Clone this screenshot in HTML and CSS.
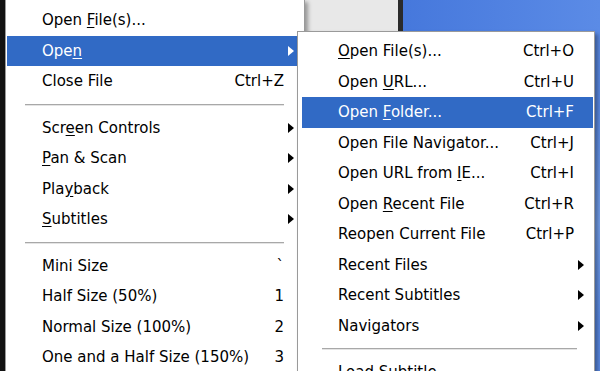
FILE: index.html
```html
<!DOCTYPE html>
<html lang="en">

<head>
    <meta charset="UTF-8">
    <meta name="viewport" content="width=device-width, initial-scale=1.0">
    <title>Open Menu</title>
    <link rel="stylesheet" href="styles.css">
</head>

<body>
    <div class="screen">
        <div class="window-edge"></div>

        <!-- main context menu -->
        <div class="menu menu-main">
            <div class="item"><span class="label">Open <u>F</u>ile(s)...</span><span class="key"></span><span class="sub"></span></div>
            <div class="item active"><span class="label">Ope<u>n</u></span><span class="key"></span><span class="sub"><i class="arrow"></i></span></div>
            <div class="item"><span class="label">Close File</span><span class="key">Ctrl+Z</span><span class="sub"></span></div>
            <div class="separator"></div>
            <div class="item"><span class="label">Scr<u>e</u>en Controls</span><span class="key"></span><span class="sub"><i class="arrow"></i></span></div>
            <div class="item"><span class="label"><u>P</u>an &amp; Scan</span><span class="key"></span><span class="sub"><i class="arrow"></i></span></div>
            <div class="item"><span class="label">Pla<u>y</u>back</span><span class="key"></span><span class="sub"><i class="arrow"></i></span></div>
            <div class="item"><span class="label"><u>S</u>ubtitles</span><span class="key"></span><span class="sub"><i class="arrow"></i></span></div>
            <div class="separator"></div>
            <div class="item"><span class="label">Mini Size</span><span class="key">`</span><span class="sub"></span></div>
            <div class="item"><span class="label">Half Size (50%)</span><span class="key">1</span><span class="sub"></span></div>
            <div class="item"><span class="label">Normal Size (100%)</span><span class="key">2</span><span class="sub"></span></div>
            <div class="item"><span class="label">One and a Half Size (150%)</span><span class="key">3</span><span class="sub"></span></div>
        </div>

        <!-- "Open" flyout -->
        <div class="menu menu-open">
            <div class="item"><span class="label"><u>O</u>pen File(s)...</span><span class="key">Ctrl+O</span><span class="sub"></span></div>
            <div class="item"><span class="label">Open <u>U</u>RL...</span><span class="key">Ctrl+U</span><span class="sub"></span></div>
            <div class="item active"><span class="label">Open <u>F</u>older...</span><span class="key">Ctrl+F</span><span class="sub"></span></div>
            <div class="item"><span class="label">Open File Navigator...</span><span class="key">Ctrl+J</span><span class="sub"></span></div>
            <div class="item"><span class="label">Open URL from <u>I</u>E...</span><span class="key">Ctrl+I</span><span class="sub"></span></div>
            <div class="item"><span class="label">Open <u>R</u>ecent File</span><span class="key">Ctrl+R</span><span class="sub"></span></div>
            <div class="item"><span class="label">Reopen Current File</span><span class="key">Ctrl+P</span><span class="sub"></span></div>
            <div class="item"><span class="label">Recent Files</span><span class="key"></span><span class="sub"><i class="arrow"></i></span></div>
            <div class="item"><span class="label">Recent Subtitles</span><span class="key"></span><span class="sub"><i class="arrow"></i></span></div>
            <div class="item"><span class="label">Navigators</span><span class="key"></span><span class="sub"><i class="arrow"></i></span></div>
            <div class="separator"></div>
            <div class="item"><span class="label">Load Subtitle...</span><span class="key"></span><span class="sub"></span></div>
        </div>
    </div>
</body>

</html>
```

FILE: styles.css
```css
body {
    margin: 0;
    font-family: "DejaVu Sans", Verdana, sans-serif;
    font-size: 15px;
    color: #000;
}

.screen {
    position: relative;
    display: flex;
    align-items: flex-start;
    width: 600px;
    height: 371px;
    overflow: hidden;
    background:
        linear-gradient(160deg, rgba(255, 255, 255, 0) 55%, rgba(150, 190, 250, 0.45) 75%, rgba(255, 255, 255, 0) 92%),
        linear-gradient(90deg, #e8e8e8 0 398px, #2b2b2b 398px 403px, #4678dc 403px, #5b8be6 100%);
}

.window-edge {
    flex: none;
    width: 5px;
    height: 371px;
    background-color: #121212;
}

.menu {
    flex: none;
    box-sizing: border-box;
    background-color: #fff;
    border: 1px solid #9a9a9a;
    box-shadow: 3px 3px 4px rgba(0, 0, 0, 0.35);
}

.menu-main {
    width: 300px;
    margin-top: -1px;
    padding: 5px 1px;
}

.menu-open {
    position: absolute;
    left: 297px;
    top: 31px;
    width: 298px;
    padding: 4px 1px 4px 4px;
}

.item {
    display: flex;
    align-items: center;
    height: 30.5px;
    padding-left: 35px;
    white-space: nowrap;
}

.menu-open .item {
    padding-left: 36px;
}

.item .label {
    flex: 1;
}

.item .key {
    text-align: right;
}

.item .sub {
    flex: none;
    width: 19px;
    display: flex;
    align-items: center;
    padding-left: 4px;
    box-sizing: border-box;
}

.item u {
    text-underline-offset: 2px;
}

.item.active {
    background-color: #316ac5;
    color: #fff;
}

.arrow {
    width: 0;
    height: 0;
    border-top: 5px solid transparent;
    border-bottom: 5px solid transparent;
    border-left: 6px solid #000;
}

.item.active .arrow {
    border-left-color: #fff;
}

.separator {
    height: 1px;
    margin: 7px 19px 7px 18px;
    border-bottom: 1px solid #e4e4e4;
    background-color: #a8a8a8;
}

.menu-open .separator {
    margin: 7px 16px 7px 20px;
}
```
